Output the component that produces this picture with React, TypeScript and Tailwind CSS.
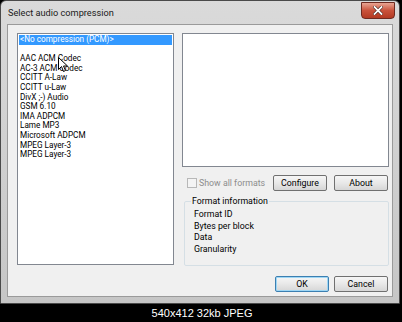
const codecs = [
  '<No compression (PCM)>',
  '',
  'AAC ACM Codec',
  'AC-3 ACM Codec',
  'CCITT A-Law',
  'CCITT u-Law',
  'DivX ;-) Audio',
  'GSM 6.10',
  'IMA ADPCM',
  'Lame MP3',
  'Microsoft ADPCM',
  'MPEG Layer-3',
  'MPEG Layer-3',
]

const info = ['Format ID', 'Bytes per block', 'Data', 'Granularity']

const Button: React.FC<{ label: string; primary?: boolean }> = ({ label, primary }) => (
  <button
    className={`flex h-[16px] w-[54px] items-center justify-center rounded-[2px] border bg-gradient-to-b from-[#f6f6f6] via-[#e8e8e8] to-[#d6d6d6] text-[8.8px] leading-none text-black ${
      primary ? 'border-[#3c7fb1] shadow-[inset_0_0_0_1px_#9fd7f5]' : 'border-[#707070]'
    }`}
  >
    {label}
  </button>
)

export default function App() {
  return (
    <div
      className="flex h-[322px] w-[402px] flex-col bg-black"
      style={{ fontFamily: 'Roboto, "Noto Sans", sans-serif' }}
    >
      <div className="flex h-[304px] w-[400px] flex-col rounded-t-[6px] border border-[#4a4a4a] bg-gradient-to-b from-[#dadada] to-[#c6c6c6] px-[6px] pb-[6px]">
        {/* title bar */}
        <div className="flex h-[23px] items-start justify-between">
          <span className="pl-[1px] pt-[7px] text-[9.2px] leading-none text-[#1a1a1a]">
            Select audio compression
          </span>
          <div className="mr-[-2px] mt-[1px] flex h-[17px] w-[34px] items-center justify-center rounded-b-[4px] border border-[#6e2a20] bg-gradient-to-b from-[#e8a493] via-[#c9523b] to-[#b33a22]">
            <svg width="10" height="9" viewBox="0 0 10 9">
              <path d="M1.5 1 L8.5 8 M8.5 1 L1.5 8" stroke="#3a1a14" strokeWidth="3" strokeLinecap="square" />
              <path d="M1.5 1 L8.5 8 M8.5 1 L1.5 8" stroke="#ffffff" strokeWidth="1.8" strokeLinecap="square" />
            </svg>
          </div>
        </div>

        {/* client area */}
        <div className="relative flex flex-1 flex-col border border-[#9a9a9a] bg-[#f0f0f0]">
          <div className="flex gap-[8px] pl-[9px] pt-[8px]">
            <div className="h-[232px] w-[157px] border border-[#828790] bg-white p-[1px]">
              {codecs.map((c, i) => (
                <div
                  key={i}
                  className={`h-[9.6px] whitespace-pre pl-[1px] text-[8.2px] leading-[9.6px] ${
                    i === 0 ? 'bg-[#3399ff] text-white' : 'text-black'
                  }`}
                >
                  {c || ' '}
                </div>
              ))}
            </div>

            <div className="flex w-[207px] flex-col">
              <div className="h-[134px] border border-[#828790] bg-white" />

              <div className="mt-[8px] flex h-[16px] items-center">
                <div className="ml-[5px] h-[10px] w-[10px] border border-[#b8b8b8] bg-[#f4f4f4]" />
                <span className="ml-[2px] text-[8.8px] leading-none text-[#8d8d8d]">Show all formats</span>
                <div className="ml-auto mr-[1px] flex gap-[7px]">
                  <Button label="Configure" />
                  <Button label="About" />
                </div>
              </div>

              <fieldset className="mt-[4px] ml-[2px] h-[71px] rounded-[2px] border border-[#d5dfe5] px-[9px]">
                <legend className="ml-[-3px] px-[1px] text-[8.8px] leading-[12px] text-black">Format information</legend>
                <div className="mt-[2px] flex flex-col">
                  {info.map((t) => (
                    <div key={t} className="h-[11.7px] text-[8.8px] leading-[11.7px] text-black">
                      {t}
                    </div>
                  ))}
                </div>
              </fieldset>
            </div>
          </div>

          <div className="mt-auto flex justify-end gap-[5px] pb-[4px] pr-[4px]">
            <Button label="OK" primary />
            <Button label="Cancel" />
          </div>

          {/* mouse pointer */}
          <svg className="absolute left-[50px] top-[32px]" width="10" height="16" viewBox="0 0 10 16">
            <path d="M0.5 0.5 L0.5 12.5 L3.5 9.5 L5.5 14.5 L7.5 13.5 L5.5 9 L9.5 9 Z" fill="#ffffff" stroke="#000000" strokeWidth="1" />
          </svg>
        </div>
      </div>

      <div
        className="flex flex-1 items-center justify-center pl-[2px] text-[11px] leading-none text-white"
        style={{ fontFamily: '"Liberation Sans", Arial, sans-serif' }}
      >
        540x412 32kb JPEG
      </div>
    </div>
  )
}
